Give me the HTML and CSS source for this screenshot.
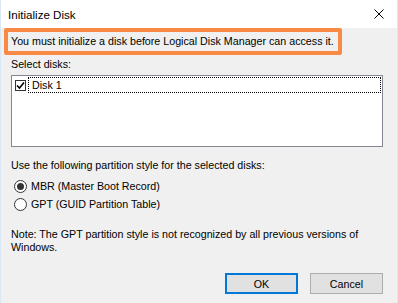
FILE: index.html
```html
<!DOCTYPE html>
<html lang="en">
<head>
  <meta charset="UTF-8">
  <title>Initialize Disk</title>
  <link rel="stylesheet" href="styles.css">
</head>
<body>
  <div class="window">
    <div class="titlebar">
      <span class="title">Initialize Disk</span>
      <button class="close-button" aria-label="Close">
        <svg width="10" height="10" viewBox="0 0 10 10">
          <path d="M0.5 0.5 L9.5 9.5 M9.5 0.5 L0.5 9.5" stroke="#000" stroke-width="1" fill="none"/>
        </svg>
      </button>
    </div>

    <div class="content">
      <div class="notice">You must initialize a disk before Logical Disk Manager can access it.</div>

      <div class="label">Select disks:</div>
      <div class="disk-list">
        <div class="disk-row">
          <span class="checkbox">
            <svg width="9" height="9" viewBox="0 0 9 9">
              <path d="M1 4.5 L3.5 7 L8 1.5" stroke="#000" stroke-width="1.6" fill="none"/>
            </svg>
          </span>
          <span class="disk-name">Disk 1</span>
        </div>
      </div>

      <div class="label style-label">Use the following partition style for the selected disks:</div>
      <div class="radio-group">
        <label class="radio-row">
          <span class="radio checked"></span>
          MBR (Master Boot Record)
        </label>
        <label class="radio-row">
          <span class="radio"></span>
          GPT (GUID Partition Table)
        </label>
      </div>

      <p class="note">Note: The GPT partition style is not recognized by all previous versions of Windows.</p>

      <div class="buttons">
        <button class="dialog-button default">OK</button>
        <button class="dialog-button">Cancel</button>
      </div>
    </div>
  </div>
</body>
</html>
```

FILE: styles.css
```css
body {
  margin: 0;
  font-family: "Liberation Sans", Arial, sans-serif;
  font-size: 10.7px;
  color: #000;
  background: #f0f0f0;
}
.window {
  width: 398px;
  height: 303px;
  box-sizing: border-box;
  border-left: 1px solid #d9e8f5;
  border-right: 1px solid #d9e8f5;
  background: #f0f0f0;
}
.titlebar {
  height: 28px;
  background: #fff;
  display: flex;
  align-items: center;
  justify-content: space-between;
  padding-left: 7px;
  font-size: 11.6px;
}
.close-button {
  width: 30px;
  height: 28px;
  margin-right: 3px;
  border: none;
  background: transparent;
  padding: 0;
  display: flex;
  align-items: center;
  justify-content: center;
}
.content {
  padding: 0 14px 0 10px;
}
.notice {
  margin-left: -7px;
  width: 327px;
  height: 19px;
  line-height: 19px;
  padding-left: 3px;
  border: 4px solid #f98a45;
  border-radius: 2px;
}
.label {
  margin-top: 2px;
  line-height: 14px;
}
.disk-list {
  margin-top: 4px;
  height: 69px;
  border: 1px solid #828790;
  background: #fff;
  padding: 1px 1px 0 3px;
}
.disk-row {
  display: flex;
  align-items: center;
  height: 16px;
}
.checkbox {
  width: 9px;
  height: 9px;
  border: 1px solid #333;
  background: #fff;
  display: flex;
  align-items: center;
  justify-content: center;
}
.disk-name {
  flex: 1;
  height: 14px;
  line-height: 14px;
  margin-left: 2px;
  padding-left: 3px;
  border: 1px dotted #000;
}
.style-label {
  margin-top: 11px;
}
.radio-group {
  margin-top: 5px;
}
.radio-row {
  display: flex;
  align-items: center;
  height: 18px;
}
.radio {
  width: 11px;
  height: 11px;
  border: 1px solid #333;
  border-radius: 50%;
  background: #fff;
  margin: 0 4px 0 3px;
  box-sizing: content-box;
  display: flex;
  align-items: center;
  justify-content: center;
}
.radio.checked::after {
  content: "";
  width: 7px;
  height: 7px;
  border-radius: 50%;
  background: #333;
}
.note {
  margin: 15px 0 0;
  line-height: 13px;
}
.buttons {
  display: flex;
  justify-content: flex-end;
  gap: 12px;
  margin-top: 19px;
}
.dialog-button {
  width: 73px;
  height: 21px;
  border: 1px solid #adadad;
  background: #e1e1e1;
  font-family: inherit;
  font-size: 10.7px;
  color: #000;
  padding: 0;
}
.dialog-button.default {
  border: 2px solid #0078d7;
}
```
